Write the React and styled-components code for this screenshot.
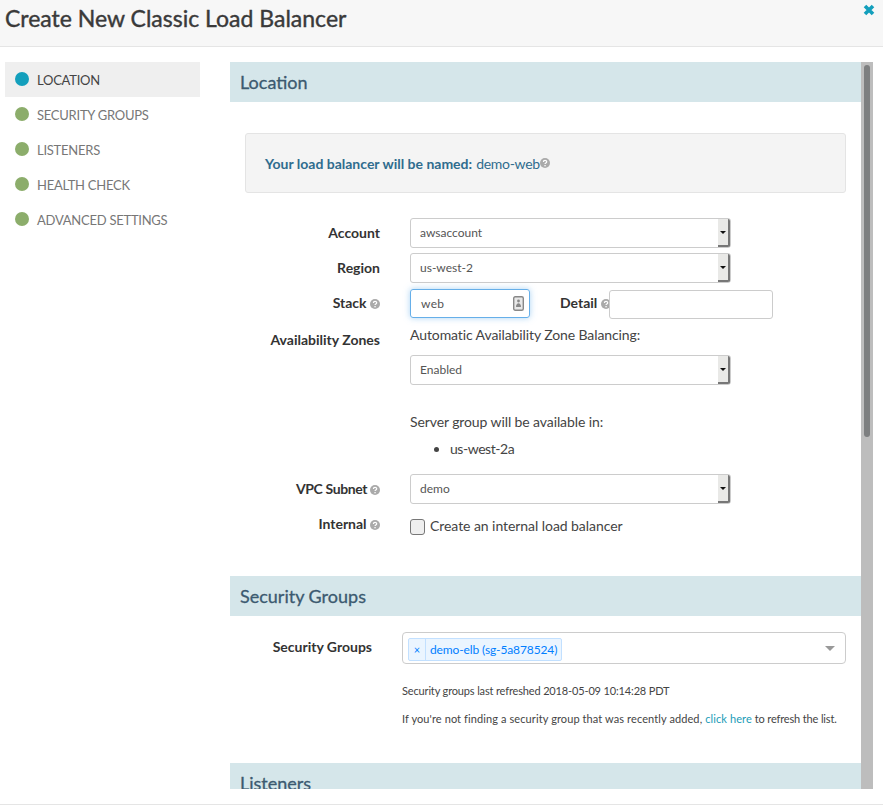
import React from "react";
import styled, { createGlobalStyle } from "styled-components";

const GlobalStyle = createGlobalStyle`
  html, body {
    margin: 0;
    padding: 0;
    background: #fff;
    font-family: "Lato", "Liberation Sans", sans-serif;
    font-size: 14px;
    color: #444;
  }
  * { box-sizing: border-box; }
`;

const Modal = styled.div`
  width: 883px;
  height: 810px;
  display: flex;
  flex-direction: column;
  overflow: hidden;
`;

const Header = styled.header`
  height: 47px;
  flex: none;
  background: #f7f7f7;
  border-bottom: 1px solid #e5e5e5;
  padding: 3px 8px 0 5px;
  display: flex;
  justify-content: space-between;
`;

const Title = styled.h3`
  margin: 0;
  font-size: 23px;
  line-height: 30px;
  font-weight: 400;
  -webkit-text-stroke: 0.4px #3a3a3a;
  color: #3a3a3a;
`;

const Close = styled.svg`
  width: 12px;
  height: 12px;
  margin-top: 1px;
`;

const Body = styled.div`
  flex: none;
  height: 742px;
  padding: 15px 10px 0 5px;
  display: flex;
`;

const Nav = styled.nav`
  width: 195px;
  flex: none;
  margin-right: 30px;
`;

const NavItem = styled.div`
  height: 35px;
  display: flex;
  align-items: center;
  padding-left: 10px;
  gap: 8px;
  background: ${(p) => (p.$active ? "#efefef" : "transparent")};
  color: ${(p) => (p.$active ? "#444" : "#777")};
  font-size: 13px;
  letter-spacing: -0.25px;
`;

const Dot = styled.span`
  width: 14px;
  height: 14px;
  border-radius: 50%;
  margin-top: -2px;
  background: ${(p) => (p.$active ? "#139fbc" : "#8cad6b")};
`;

const Content = styled.main`
  width: 631px;
  flex: none;
  overflow: hidden;
`;

const Track = styled.div`
  width: 12px;
  flex: none;
  background: #bdbdbd;
  padding: 3px 3px 0;
`;

const Thumb = styled.div`
  height: 372px;
  border-radius: 3px;
  background: #7d7f80;
`;

const SectionHead = styled.h4`
  margin: ${(p) => p.$top || 0}px 0 0;
  height: 40px;
  padding-left: 10px;
  background: #d5e6ea;
  color: #3c5a70;
  font-size: 18px;
  font-weight: 400;
  -webkit-text-stroke: 0.3px #3c5a70;
  line-height: 41px;
`;

const NameBox = styled.div`
  margin: 31px 15px 25px;
  height: 60px;
  background: #f4f4f4;
  border: 1px solid #e4e4e4;
  border-radius: 3px;
  padding-left: 19px;
  display: flex;
  align-items: center;
  color: #2f6c8e;
  font-size: 14px;
  b { margin-right: 4px; }
`;

const NameValue = styled.span`
  letter-spacing: -0.3px;
`;

const Row = styled.div`
  display: flex;
  align-items: ${(p) => p.$align || "center"};
  margin-top: ${(p) => p.$top || 0}px;
`;

const Label = styled.div`
  width: ${(p) => p.$width || 150}px;
  flex: none;
  margin-right: 30px;
  padding: ${(p) => p.$pad || "0 0 2px"};
  text-align: right;
  font-weight: 700;
  color: #333;
  font-size: 14px;
  letter-spacing: ${(p) => p.$spacing || 0}px;
`;

const Help = styled.svg`
  width: 10px;
  height: 10px;
  margin-left: 0;
  vertical-align: -1px;
`;

const SelectBox = styled.div`
  width: 321px;
  height: 30px;
  background: #fff;
  border: 1px solid #ccc;
  border-radius: 3px;
  padding-left: 9px;
  display: flex;
  align-items: center;
  justify-content: space-between;
  font-size: 12px;
  color: #555;
`;

const SelectText = styled.span`
  padding-bottom: 2px;
`;

const SelectButton = styled.span`
  width: 12px;
  height: 28px;
  flex: none;
  background: #e9e9e7;
  border-right: 2px solid #777;
  border-bottom: 2px solid #777;
  border-radius: 0 2px 2px 0;
  display: flex;
  align-items: center;
  justify-content: center;
  &::after {
    content: "";
    border: 3px solid transparent;
    border-top: 3px solid #111;
    border-bottom: 0;
  }
`;

const StackInput = styled.div`
  width: 120px;
  height: 29px;
  border: 1px solid #66afe9;
  border-radius: 3px;
  box-shadow: 0 0 6px rgba(102, 175, 233, 0.55);
  padding: 0 5px 0 10px;
  display: flex;
  align-items: center;
  justify-content: space-between;
  font-size: 12px;
  letter-spacing: 0.3px;
  color: #555;
`;

const KeyIcon = styled.svg`
  width: 11px;
  height: 15px;
`;

const DetailLabel = styled.div`
  margin-left: 30px;
  width: 49px;
  line-height: 27px;
  font-weight: 700;
  color: #333;
  white-space: nowrap;
`;

const DetailInput = styled.input`
  width: 164px;
  height: 29px;
  margin-top: 1px;
  border: 1px solid #ccc;
  border-radius: 3px;
  background: #fff;
  outline: none;
`;

const Field = styled.div`
  width: 440px;
`;

const Stacked = styled.div`
  display: flex;
  flex-direction: column;
`;

const Text = styled.div`
  margin: ${(p) => p.$top || 0}px 0 ${(p) => p.$bottom || 0}px;
  color: #444;
  font-size: 14px;
  letter-spacing: -0.1px;
  line-height: 20px;
`;

const Zones = styled.ul`
  margin: 7px 0 0;
  padding-left: 40px;
  font-size: 14px;
  letter-spacing: -0.45px;
  line-height: 20px;
  color: #444;
`;

const CheckLabel = styled.label`
  display: flex;
  align-items: center;
  gap: 5px;
  margin-top: 1px;
  color: #444;
  font-size: 14px;
  letter-spacing: -0.06px;
`;

const CheckBox = styled.span`
  width: 15px;
  height: 16px;
  margin-top: 3px;
  border: 1px solid #777;
  border-radius: 3px;
  background: #efefef;
`;

const TagSelect = styled.div`
  width: 444px;
  height: 32px;
  border: 1px solid #ccc;
  border-radius: 4px;
  padding: 5px 0 0 5px;
  position: relative;
`;

const Tag = styled.span`
  display: inline-flex;
  height: 23px;
  border: 1px solid #c2e0ff;
  border-radius: 2px;
  background: #ebf5ff;
  color: #007eff;
  font-size: 12px;
  letter-spacing: -0.12px;
  line-height: 21px;
`;

const TagX = styled.span`
  width: 17px;
  text-align: center;
  border-right: 1px solid #c2e0ff;
  font-size: 11px;
`;

const TagName = styled.span`
  padding: 0 4px;
`;

const Caret = styled.span`
  position: absolute;
  right: 10px;
  top: 13px;
  border: 5px solid transparent;
  border-top: 5px solid #999;
  border-bottom: 0;
`;

const Small = styled.div`
  margin: ${(p) => p.$top}px 0 0 172px;
  font-size: 11px;
  line-height: 16px;
  letter-spacing: ${(p) => p.$spacing}px;
  color: #444;
  white-space: nowrap;
  a { color: #1a9cb7; }
`;

const SmallTail = styled.span`
  letter-spacing: -0.15px;
`;

const Gutter = styled.div`
  height: 15px;
  flex: none;
  background: #fff;
`;

const Footer = styled.footer`
  flex: none;
  height: 6px;
  background: #fff;
  border-top: 1px solid #e5e5e5;
`;

const HelpIcon = () => (
  <Help viewBox="0 0 10 10">
    <circle cx="5" cy="5" r="5" fill="#aaa" />
    <path d="M3.4 3.9c0-2 3.3-2 3.3-.1 0 1.2-1.7 1.1-1.7 2.3" fill="none" stroke="#fff" strokeWidth="1.2" />
    <rect x="4.4" y="7" width="1.3" height="1.3" fill="#fff" />
  </Help>
);

const Select = ({ value }) => (
  <SelectBox>
    <SelectText>{value}</SelectText>
    <SelectButton />
  </SelectBox>
);

const steps = ["Location", "Security Groups", "Listeners", "Health Check", "Advanced Settings"];

export default function App() {
  return (
    <Modal>
      <GlobalStyle />
      <Header>
        <Title>Create New Classic Load Balancer</Title>
        <Close viewBox="0 0 12 12">
          <path d="M2 2l8 8M10 2l-8 8" stroke="#139fbc" strokeWidth="3.6" fill="none" />
        </Close>
      </Header>
      <Body>
        <Nav>
          {steps.map((step, i) => (
            <NavItem key={step} $active={i === 0}>
              <Dot $active={i === 0} />
              {step.toUpperCase()}
            </NavItem>
          ))}
        </Nav>
        <Content>
          <SectionHead>Location</SectionHead>
          <NameBox>
            <b>Your load balancer will be named:</b>
            <NameValue>demo-web</NameValue>
            <HelpIcon />
          </NameBox>
          <Row>
            <Label>Account</Label>
            <Select value="awsaccount" />
          </Row>
          <Row $top={5}>
            <Label>Region</Label>
            <Select value="us-west-2" />
          </Row>
          <Row $top={6} $align="flex-start">
            <Label $pad="5px 0 0">
              Stack <HelpIcon />
            </Label>
            <StackInput>
              web
              <KeyIcon viewBox="0 0 11 15">
                <rect x="0.7" y="0.7" width="9.6" height="13.6" rx="1.5" fill="#e8e8e8" stroke="#888" strokeWidth="1.4" />
                <circle cx="5.5" cy="5" r="1.4" fill="#888" />
                <path d="M3 11c0-5 5-5 5 0z" fill="#888" />
              </KeyIcon>
            </StackInput>
            <DetailLabel>
              Detail <HelpIcon />
            </DetailLabel>
            <DetailInput />
          </Row>
          <Row $top={6} $align="flex-start">
            <Label $pad="6px 0 0">Availability Zones</Label>
            <Stacked>
              <Text $bottom={10}>Automatic Availability Zone Balancing:</Text>
              <Select value="Enabled" />
              <Text $top={27}>Server group will be available in:</Text>
              <Zones>
                <li>us-west-2a</li>
              </Zones>
            </Stacked>
          </Row>
          <Row $top={15}>
            <Label $spacing={-0.4}>
              VPC Subnet <HelpIcon />
            </Label>
            <Select value="demo" />
          </Row>
          <Row $top={11} $align="flex-start">
            <Label $pad="0">
              Internal <HelpIcon />
            </Label>
            <CheckLabel>
              <CheckBox />
              Create an internal load balancer
            </CheckLabel>
          </Row>
          <SectionHead $top={41}>Security Groups</SectionHead>
          <Row $top={16} $align="flex-start">
            <Label $width={142} $pad="6px 0 0">
              Security Groups
            </Label>
            <Field>
              <TagSelect>
                <Tag>
                  <TagX>×</TagX>
                  <TagName>demo-elb (sg-5a878524)</TagName>
                </Tag>
                <Caret />
              </TagSelect>
            </Field>
          </Row>
          <Small $top={19} $spacing={-0.15}>Security groups last refreshed 2018-05-09 10:14:28 PDT</Small>
          <Small $top={12} $spacing={0.1}>
            If you're not finding a security group that was recently added, <a>click here</a>{" "}
            <SmallTail>to refresh the list.</SmallTail>
          </Small>
          <SectionHead $top={36}>Listeners</SectionHead>
        </Content>
        <Track>
          <Thumb />
        </Track>
      </Body>
      <Gutter />
      <Footer />
    </Modal>
  );
}
